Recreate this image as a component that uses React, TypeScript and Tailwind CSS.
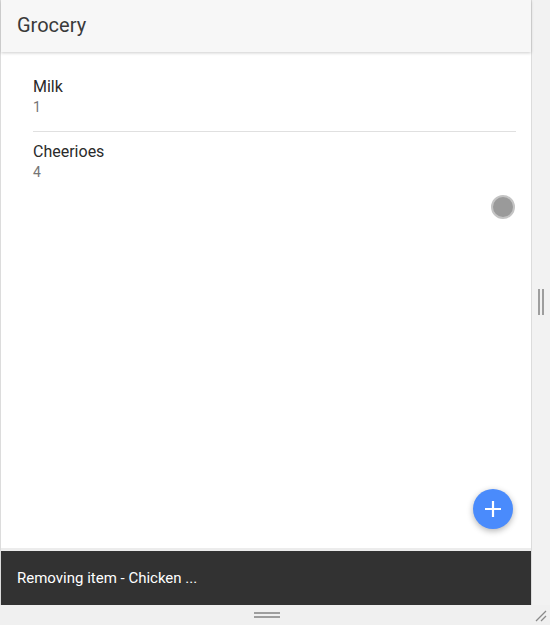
import React from "react";

export default function App() {
  return (
    <div className="w-[550px] h-[629px] bg-[#f2f2f2] flex flex-col overflow-hidden" style={{ fontFamily: "Roboto, 'Liberation Sans', sans-serif" }}>
      <div className="flex h-[605px]">
        <div className="w-[532px] h-full flex flex-col bg-white border-l border-r border-[#dcdcdc]">
          <div className="h-[52px] bg-[#f7f7f7] shadow-[0_1px_3px_rgba(0,0,0,0.2)] flex items-center px-[16px] pb-[2px] z-10">
            <span className="text-[20px] text-[#3a3a3a]">Grocery</span>
          </div>
          <div className="relative flex-1 bg-white border-b-[3px] border-[#ececec]">
            <div className="px-[32px] pt-[25px] pr-[15px]">
              <div className="pb-[14px] border-b border-[#e0e0e0]">
                <div className="text-[16px] leading-[20px] text-[#2a2a2a]">Milk</div>
                <div className="text-[14px] leading-[20px] text-[#757575]">1</div>
              </div>
              <div className="pt-[10px]">
                <div className="text-[16px] leading-[20px] text-[#2a2a2a]">Cheerioes</div>
                <div className="text-[14px] leading-[20px] text-[#757575]">4</div>
              </div>
            </div>
            <div className="absolute left-[490px] top-[143px] w-[24px] h-[24px] rounded-full bg-[#9a9a9a] border-2 border-[#c4c4c4]" />
            <div className="absolute left-[472px] top-[437px] w-[40px] h-[40px] rounded-full bg-[#4a8bfc] shadow-[0_2px_6px_rgba(0,0,0,0.3)] flex items-center justify-center">
              <svg width="18" height="18" viewBox="0 0 18 18">
                <path d="M9 1v16M1 9h16" stroke="white" strokeWidth="2.2" />
              </svg>
            </div>
          </div>
          <div className="h-[54px] bg-[#323232] flex items-center px-[16px]">
            <span className="text-[15px] text-white">Removing item - Chicken ...</span>
          </div>
        </div>
        <div className="flex-1 flex items-center justify-center">
          <div className="flex gap-[2px] h-[26px] -mt-[2px]">
            <div className="w-[2px] h-full bg-[#9e9e9e]" />
            <div className="w-[2px] h-full bg-[#9e9e9e]" />
          </div>
        </div>
      </div>
      <div className="relative h-[20px] bg-[#f0f0f0] flex pt-[7px] pl-[254px]">
        <div className="flex flex-col gap-[2px] w-[26px]">
          <div className="h-[2px] bg-[#9e9e9e]" />
          <div className="h-[2px] bg-[#9e9e9e]" />
        </div>
        <svg className="absolute right-[3px] top-[3px]" width="14" height="14" viewBox="0 0 14 14">
          <path d="M13 3L3 13M13 8L8 13" stroke="#8a8a8a" strokeWidth="1.3" />
        </svg>
      </div>
      <div className="flex-1 bg-white" />
    </div>
  );
}
